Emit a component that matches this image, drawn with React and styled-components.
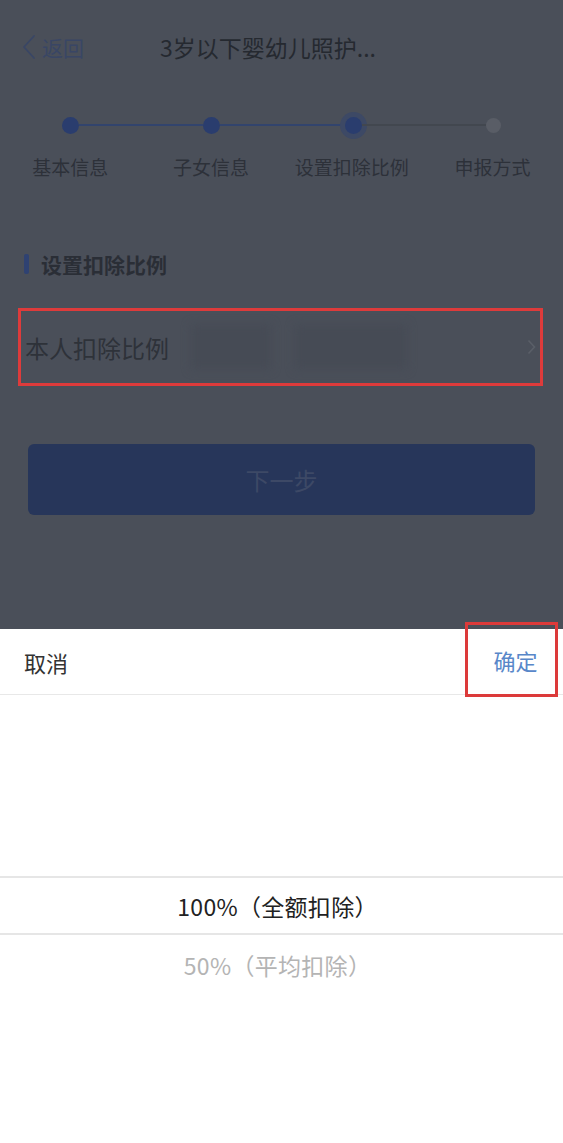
import styled, { createGlobalStyle } from "styled-components";

const GlobalStyle = createGlobalStyle`
	html, body {
		margin: 0;
		padding: 0;
	}
	body {
		font-family: "Noto Sans CJK SC", "Noto Sans", sans-serif;
	}
	* {
		box-sizing: border-box;
	}
`;

const Screen = styled.div`
	height: 100vh;
	display: grid;
	grid-template-rows: 1fr 514px;
	overflow: hidden;
`;

// page behind the picker, already dimmed by the mask
const Dimmed = styled.div`
	background: #4a4f59;
	display: flex;
	flex-direction: column;
`;

const NavBar = styled.div`
	height: 94px;
	display: flex;
	align-items: center;
	padding-left: 22px;
`;

const Back = styled.div`
	display: flex;
	align-items: center;
	gap: 6px;
	color: #394665;
	font-size: 21px;
	svg {
		display: block;
	}
`;

const Title = styled.div`
	margin-left: 76px;
	color: #252930;
	font-size: 23px;
`;

const Stepper = styled.div`
	padding-top: 17px;
`;

const DotTrack = styled.div`
	height: 28px;
	display: flex;
	align-items: center;
	padding: 0 62px 0 62px;
`;

const Dot = styled.span`
	flex: none;
	width: ${(p) => (p.$state === "todo" ? 15 : 17)}px;
	height: ${(p) => (p.$state === "todo" ? 15 : 17)}px;
	border-radius: 50%;
	background: ${(p) => (p.$state === "todo" ? "#595d66" : "#2a3d6e")};
	box-shadow: ${(p) =>
		p.$state === "current" ? "0 0 0 5px #3d4965" : "none"};
`;

const Connector = styled.span`
	flex: 1;
	height: 2px;
	background: ${(p) => (p.$active ? "#32446d" : "#42474f")};
`;

const Labels = styled.div`
	display: grid;
	grid-template-columns: repeat(4, 1fr);
	margin-top: 14px;
`;

const Label = styled.div`
	text-align: center;
	color: #2d3139;
	font-size: 19px;
	line-height: 28px;
`;

const SectionTitle = styled.div`
	margin: 68px 0 0 24px;
	display: flex;
	align-items: center;
	gap: 12px;
	color: #2a2e36;
	font-size: 21px;
	font-weight: 700;
	line-height: 30px;
	&::before {
		content: "";
		width: 5px;
		height: 20px;
		border-radius: 2px;
		background: #2f4272;
	}
`;

const FieldRow = styled.div`
	margin: 29px 20px 0 18px;
	height: 78px;
	display: flex;
	align-items: center;
	padding: 0 4px 0 4px;
	border: 3px solid ${(p) => (p.$marked ? "#de3b3b" : "transparent")};
`;

const FieldLabel = styled.span`
	color: #2e3239;
	font-size: 24px;
`;

const Masked = styled.span`
	height: 44px;
	width: ${(p) => p.$w}px;
	margin-left: ${(p) => p.$gap}px;
	background: #464b55;
	filter: blur(5px);
`;

const Arrow = styled.span`
	margin-left: auto;
	display: flex;
	color: #5a5f68;
`;

const NextButton = styled.div`
	margin: 58px 28px 0;
	height: 71px;
	border-radius: 6px;
	background: #27365a;
	color: #3d4966;
	font-size: 24px;
	display: flex;
	align-items: center;
	justify-content: center;
`;

const Sheet = styled.div`
	background: #fff;
	display: flex;
	flex-direction: column;
`;

const SheetHeader = styled.div`
	height: 66px;
	flex: none;
	display: flex;
	align-items: center;
	justify-content: space-between;
	padding: 0 5px 0 24px;
	border-bottom: 1px solid #e8e8e8;
`;

const Cancel = styled.span`
	color: #333;
	font-size: 22px;
`;

const Confirm = styled.span`
	width: 93px;
	height: 75px;
	display: flex;
	align-items: center;
	justify-content: center;
	padding-left: 8px;
	color: #5887c9;
	font-size: 22px;
	border: 3px solid ${(p) => (p.$marked ? "#dc3a3a" : "transparent")};
	position: relative;
	top: -2px;
`;

const Picker = styled.div`
	padding-top: 181px;
`;

const Option = styled.div`
	height: ${(p) => (p.$selected ? 59 : 60)}px;
	display: flex;
	align-items: center;
	justify-content: center;
	padding-right: 8px;
	font-size: 23px;
	letter-spacing: 0.3px;
	color: ${(p) => (p.$selected ? "#222" : "#b4b4b4")};
	border-top: ${(p) => (p.$selected ? "2px solid #e6e6e6" : "none")};
	border-bottom: ${(p) => (p.$selected ? "2px solid #e6e6e6" : "none")};
`;

const steps = [
	{ label: "基本信息", state: "done" },
	{ label: "子女信息", state: "done" },
	{ label: "设置扣除比例", state: "current" },
	{ label: "申报方式", state: "todo" },
];

const options = ["100%（全额扣除）", "50%（平均扣除）"];

export default function App() {
	return (
		<>
			<GlobalStyle />
			<Screen>
				<Dimmed>
					<NavBar>
						<Back>
							<svg width="14" height="26" viewBox="0 0 14 26">
								<path
									d="M12 2 L2 13 L12 24"
									fill="none"
									stroke="#394665"
									strokeWidth="1.8"
									strokeLinecap="round"
									strokeLinejoin="round"
								/>
							</svg>
							返回
						</Back>
						<Title>3岁以下婴幼儿照护...</Title>
					</NavBar>

					<Stepper>
						<DotTrack>
							{steps.map((s, i) => [
								i > 0 && <Connector key={"c" + i} $active={s.state !== "todo"} />,
								<Dot key={s.label} $state={s.state} />,
							])}
						</DotTrack>
						<Labels>
							{steps.map((s) => (
								<Label key={s.label}>{s.label}</Label>
							))}
						</Labels>
					</Stepper>

					<SectionTitle>设置扣除比例</SectionTitle>

					<FieldRow $marked>
						<FieldLabel>本人扣除比例</FieldLabel>
						<Masked $w={80} $gap={22} />
						<Masked $w={112} $gap={24} />
						<Arrow>
							<svg width="9" height="16" viewBox="0 0 9 16">
								<path
									d="M1.5 1.5 L7.5 8 L1.5 14.5"
									fill="none"
									stroke="currentColor"
									strokeWidth="1.6"
								/>
							</svg>
						</Arrow>
					</FieldRow>

					<NextButton>下一步</NextButton>
				</Dimmed>

				<Sheet>
					<SheetHeader>
						<Cancel>取消</Cancel>
						<Confirm $marked>确定</Confirm>
					</SheetHeader>
					<Picker>
						{options.map((o, i) => (
							<Option key={o} $selected={i === 0}>
								{o}
							</Option>
						))}
					</Picker>
				</Sheet>
			</Screen>
		</>
	);
}
